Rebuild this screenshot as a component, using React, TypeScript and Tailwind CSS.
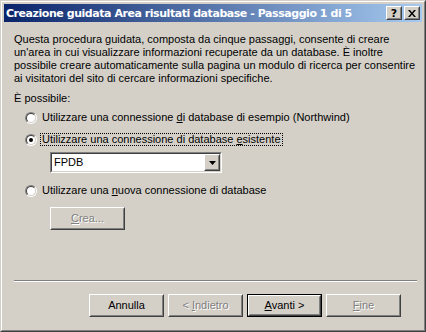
import React from 'react';

const FONT = "[font-family:'Liberation_Sans',Arial,sans-serif]";

// raised 3D frame, Win2000 style
const Raised = ({ className = '', children }: { className?: string; children?: React.ReactNode }) => (
  <div className={`border border-t-white border-l-white border-r-[#404040] border-b-[#404040] ${className}`}>
    <div className="w-full h-full border border-t-[#d4d0c8] border-l-[#d4d0c8] border-r-[#808080] border-b-[#808080] flex items-center justify-center">
      {children}
    </div>
  </div>
);

const Button = ({ label, u, rest, disabled, def }: { label?: string; u: string; rest: string; disabled?: boolean; def?: boolean }) => {
  const txt = disabled ? 'text-[#808080] [text-shadow:1px_1px_0_#fff]' : 'text-black';
  const inner = (
    <Raised className="w-full h-full">
      <span className={`text-[11px] leading-[13px] ${txt}`}>
        {label}
        <span className="underline underline-offset-[1px]">{u}</span>
        {rest}
      </span>
    </Raised>
  );
  if (def) {
    return <div className="w-[75px] h-[23px] border border-black">{inner}</div>;
  }
  return <div className="w-[75px] h-[23px]">{inner}</div>;
};

const Radio = ({ checked }: { checked?: boolean }) => (
  <div className="w-[12px] h-[12px] rounded-full border border-t-[#808080] border-l-[#808080] border-r-white border-b-white">
    <div className="w-full h-full rounded-full border border-t-[#404040] border-l-[#404040] border-r-[#d4d0c8] border-b-[#d4d0c8] bg-white flex items-center justify-center">
      {checked && <div className="w-[4px] h-[4px] rounded-full bg-black" />}
    </div>
  </div>
);

export default function App() {
  return (
    <div className={`w-[426px] h-[332px] bg-[#d4d0c8] ${FONT} select-none`}>
      <div className="w-full h-full border border-t-[#d4d0c8] border-l-[#d4d0c8] border-r-[#404040] border-b-[#404040]">
        <div className="w-full h-full border border-t-white border-l-white border-r-[#808080] border-b-[#808080] p-[2px] flex flex-col">
          {/* title bar */}
          <div className="h-[18px] flex items-center pl-[2px] pr-[2px] bg-[linear-gradient(to_right,#0a246a,#a6caf0)]">
            <span className="flex-1 text-white font-bold text-[11px] leading-[13px] [font-family:'DejaVu_Sans',Tahoma,sans-serif] tracking-[-0.45px]">
              Creazione guidata Area risultati database - Passaggio 1 di 5
            </span>
            <Raised className="w-[16px] h-[14px] bg-[#d4d0c8]">
              <span className="text-[11px] leading-[11px] font-bold text-black [font-family:'DejaVu_Sans',sans-serif]">?</span>
            </Raised>
            <Raised className="w-[16px] h-[14px] ml-[2px] bg-[#d4d0c8]">
              <svg width="8" height="7" viewBox="0 0 8 7">
                <path d="M0 0h2l2 2.5L6 0h2L5 3.5 8 7H6L4 4.5 2 7H0l3-3.5z" fill="#000" />
              </svg>
            </Raised>
          </div>

          {/* body */}
          <div className="flex-1 flex flex-col pl-[10px] pr-[8px] text-black text-[11px]">
            <p className="mt-[11px] leading-[13px] whitespace-nowrap">
              Questa procedura guidata, composta da cinque passaggi, consente di creare<br />
              un'area in cui visualizzare informazioni recuperate da un database. È inoltre<br />
              possibile creare automaticamente sulla pagina un modulo di ricerca per consentire<br />
              ai visitatori del sito di cercare informazioni specifiche.
            </p>
            <p className="mt-[7px] leading-[13px]">È possibile:</p>

            <div className="mt-[6px] h-[13px] flex items-center pl-[11px] gap-[3px]">
              <Radio />
              <span className="leading-[11px] border border-transparent px-[1px]">
                Utilizzare una connessione <span className="underline underline-offset-[1px]">d</span>i database di esempio (Northwind)
              </span>
            </div>

            <div className="mt-[9px] h-[13px] flex items-center pl-[11px] gap-[3px]">
              <Radio checked />
              <span className="leading-[11px] border border-dotted border-black px-[1px]">
                Utilizzare una connessione di database <span className="underline underline-offset-[1px]">e</span>sistente
              </span>
            </div>

            {/* dropdown */}
            <div className="mt-[6px] ml-[36px] w-[172px] h-[21px] border border-t-[#808080] border-l-[#808080] border-r-white border-b-white">
              <div className="w-full h-full border border-t-[#404040] border-l-[#404040] border-r-[#d4d0c8] border-b-[#d4d0c8] bg-white flex items-center">
                <span className="flex-1 pl-[2px] leading-[13px]">FPDB</span>
                <Raised className="w-[16px] h-[17px] bg-[#d4d0c8]">
                  <svg width="7" height="4" viewBox="0 0 7 4">
                    <path d="M0 0h7L3.5 4z" fill="#000" />
                  </svg>
                </Raised>
              </div>
            </div>

            <div className="mt-[11px] h-[13px] flex items-center pl-[11px] gap-[3px]">
              <Radio />
              <span className="leading-[11px] border border-transparent px-[1px]">
                Utilizzare una <span className="underline underline-offset-[1px]">n</span>uova connessione di database
              </span>
            </div>

            <div className="mt-[10px] ml-[36px]">
              <Button u="C" rest="rea..." disabled />
            </div>

            {/* separator */}
            <div className="mt-auto mb-[12px] w-[403px] border-t border-t-[#808080] border-b border-b-white" />

            <div className="mb-[11px] flex gap-[4px] pl-[75px]">
              <Button u="" label="Annulla" rest="" />
              <Button label="< " u="I" rest="ndietro" disabled />
              <Button u="A" rest="vanti >" def />
              <Button u="F" rest="ine" disabled />
            </div>
          </div>
        </div>
      </div>
    </div>
  );
}
